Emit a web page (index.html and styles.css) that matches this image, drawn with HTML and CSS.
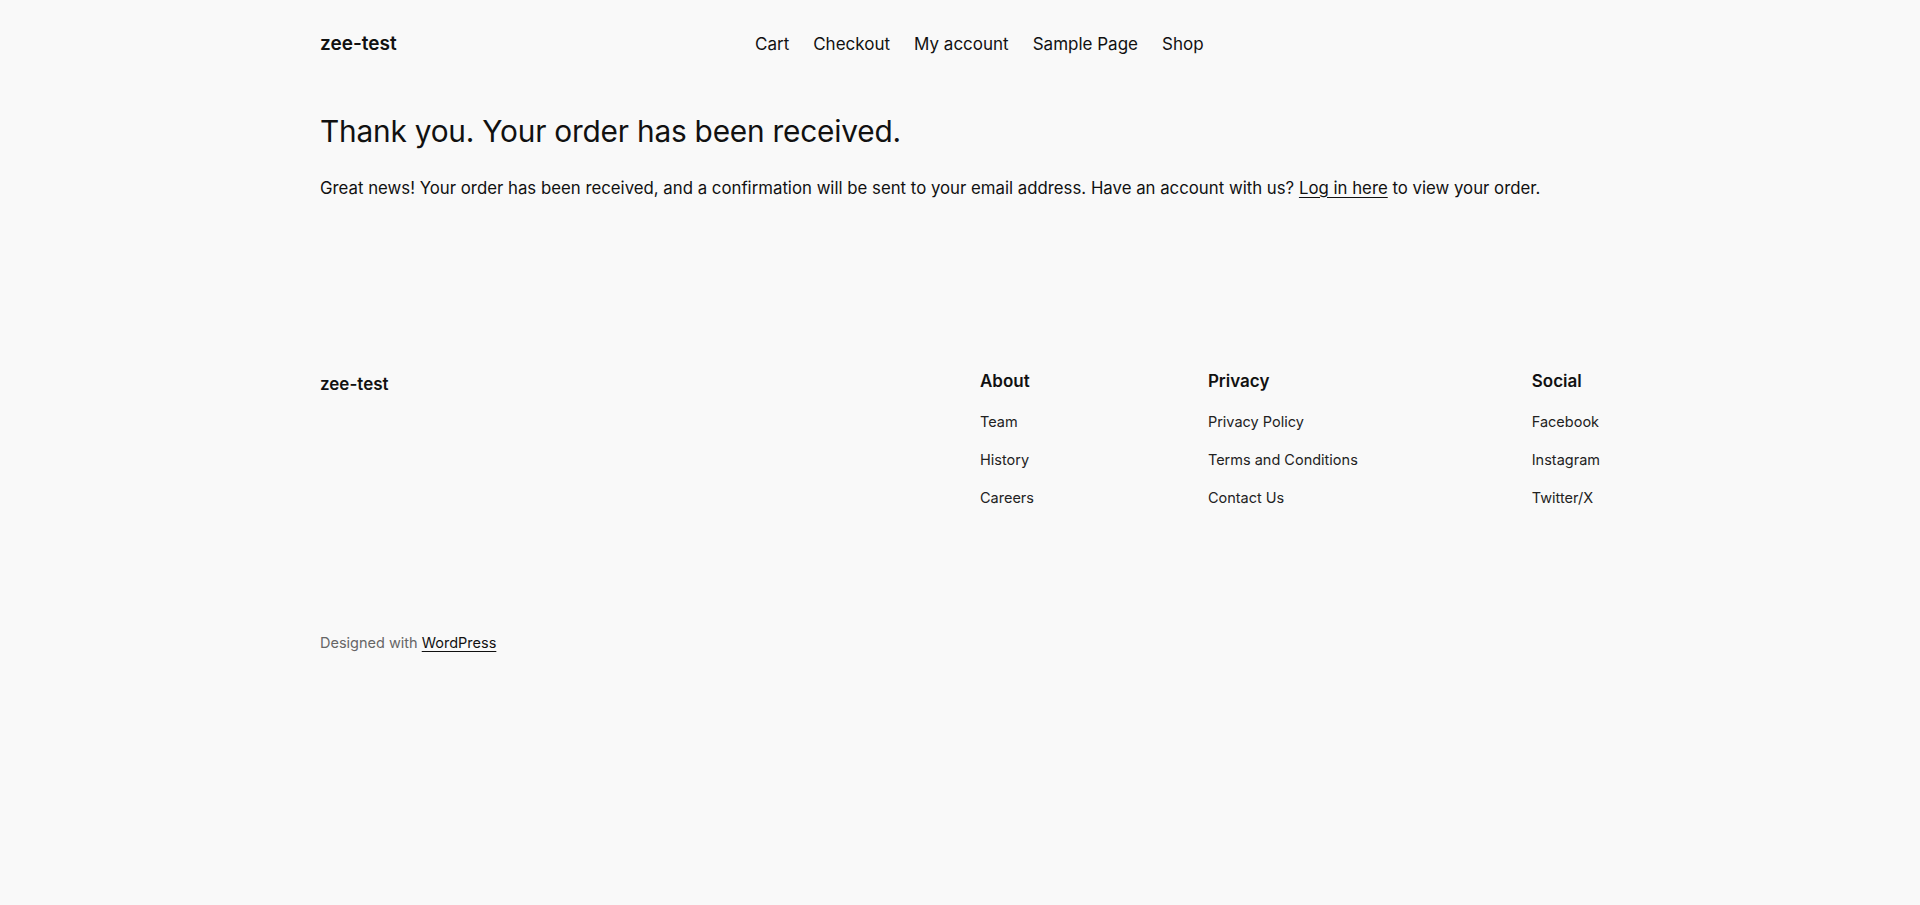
FILE: index.html
```html
<!DOCTYPE html>
<html lang="en">
<head>
<meta charset="utf-8">
<title>Order received – zee-test</title>
<link rel="stylesheet" href="styles.css">
</head>
<body>
<div class="page">
  <header class="site-header">
    <a class="site-title header-title" href="#">zee-test</a>
    <nav class="main-nav">
      <a href="#">Cart</a>
      <a href="#">Checkout</a>
      <a href="#">My account</a>
      <a href="#">Sample Page</a>
      <a href="#">Shop</a>
    </nav>
  </header>

  <main class="content">
    <h1 class="page-title">Thank you. Your order has been received.</h1>
    <p class="notice">Great news! Your order has been received, and a confirmation will be sent to your email address. Have an account with us? <a href="#">Log in here</a> to view your order.</p>
  </main>

  <footer class="site-footer">
    <div class="footer-top">
      <a class="site-title footer-title" href="#">zee-test</a>
      <div class="footer-cols">
        <div class="footer-col">
          <h2>About</h2>
          <a href="#">Team</a>
          <a href="#">History</a>
          <a href="#">Careers</a>
        </div>
        <div class="footer-col">
          <h2>Privacy</h2>
          <a href="#">Privacy Policy</a>
          <a href="#">Terms and Conditions</a>
          <a href="#">Contact Us</a>
        </div>
        <div class="footer-col">
          <h2>Social</h2>
          <a href="#">Facebook</a>
          <a href="#">Instagram</a>
          <a href="#">Twitter/X</a>
        </div>
      </div>
    </div>
    <p class="credits">Designed with <a href="#">WordPress</a></p>
  </footer>
</div>
</body>
</html>
```

FILE: styles.css
```css
* { box-sizing: border-box; }

html, body {
  margin: 0;
  padding: 0;
  background: #f9f9f9;
}

body {
  font-family: Inter, "Noto Sans", "Liberation Sans", sans-serif;
  color: #111111;
  -webkit-font-smoothing: antialiased;
}

a { color: inherit; text-decoration: none; }

.page {
  width: 1280px;
  margin: 0 auto;
}

.site-header {
  display: grid;
  grid-template-columns: 435px auto;
  align-items: baseline;
  padding-top: 30px;
}

.site-title {
  font-size: 17px;
  font-weight: 600;
  line-height: 27px;
}

.header-title {
  font-size: 19px;
}

.main-nav {
  display: flex;
  gap: 24px;
  font-size: 17px;
  line-height: 27px;
}

.content {
  padding-top: 54.8px;
}

.page-title {
  margin: 0;
  font-size: 29.8px;
  font-weight: 400;
  line-height: 36px;
  letter-spacing: -0.2px;
}

.notice {
  margin: 26px 0 0;
  font-size: 16.8px;
  line-height: 26px;
}

.notice a { text-decoration: underline; text-underline-offset: 3px; }

.site-footer {
  padding-top: 168px;
}

.footer-top {
  display: flex;
  justify-content: space-between;
  align-items: flex-start;
}

.footer-title {
  line-height: 24px;
  margin-top: 3px;
}

.footer-cols {
  width: 620px;
  display: flex;
  justify-content: space-between;
}

.footer-col {
  display: flex;
  flex-direction: column;
  gap: 16px;
}

.footer-col h2 {
  margin: 0 0 2px;
  font-size: 17px;
  font-weight: 600;
  line-height: 24px;
}

.footer-col a {
  font-size: 14.5px;
  line-height: 22px;
  color: #222;
}

.credits {
  margin: 123px 0 0;
  font-size: 14.5px;
  line-height: 22px;
  color: #666;
}

.credits a {
  color: #111;
  text-decoration: underline;
  text-underline-offset: 3px;
}
```
